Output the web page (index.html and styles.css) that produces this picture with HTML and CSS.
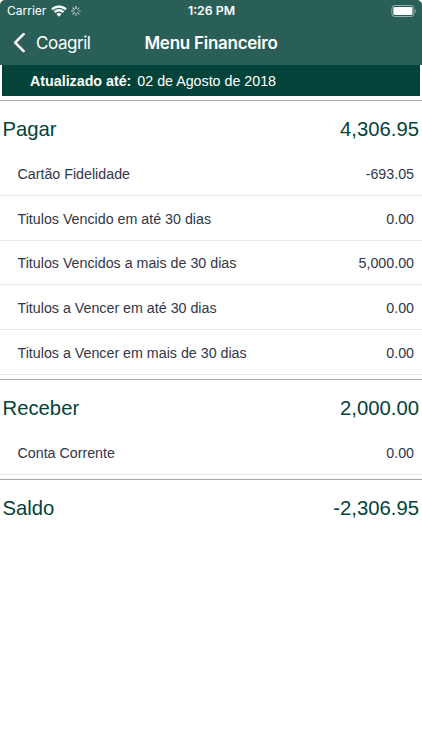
FILE: index.html
```html
<!DOCTYPE html>
<html lang="pt-BR">
<head>
    <meta charset="UTF-8">
    <meta name="viewport" content="width=device-width, initial-scale=1.0">
    <title>Menu Financeiro</title>
    <link rel="stylesheet" href="styles.css">
</head>
<body>

    <div class="screen">
        <header class="header">
            <div class="status-bar">
                <div class="status-left">
                    <span class="carrier">Carrier</span>
                    <svg class="wifi" width="16" height="12" viewBox="0 0 16 12" fill="none" stroke="#fff" stroke-width="2.3">
                        <path d="M1 4.4a10 10 0 0 1 14 0"/>
                        <path d="M3.5 7.1a6.4 6.4 0 0 1 9 0"/>
                        <path d="M5.4 9.1a3.8 3.8 0 0 1 5.2 0L8 11.7z" fill="#fff" stroke="none"/>
                    </svg>
                    <svg class="spinner" width="10" height="10" viewBox="0 0 10 10" stroke="#fff" stroke-width="1.1" stroke-linecap="round">
                        <path d="M5 .6v2" opacity=".9"/>
                        <path d="M8.1 1.9L6.7 3.3" opacity=".5"/>
                        <path d="M9.4 5h-2" opacity=".5"/>
                        <path d="M8.1 8.1L6.7 6.7" opacity=".6"/>
                        <path d="M5 9.4v-2" opacity=".65"/>
                        <path d="M1.9 8.1l1.4-1.4" opacity=".7"/>
                        <path d="M.6 5h2" opacity=".8"/>
                        <path d="M1.9 1.9l1.4 1.4" opacity=".85"/>
                    </svg>
                </div>
                <span class="time">1:26 PM</span>
                <svg class="battery" width="26" height="12" viewBox="0 0 26 12">
                    <rect x=".9" y=".5" width="22" height="11" rx="2.8" fill="none" stroke="#fff" stroke-opacity=".5"/>
                    <rect x="2.4" y="2" width="19" height="8" rx="1.3" fill="#fff"/>
                    <path d="M24.2 4.2c1.4.5 1.4 3.1 0 3.6z" fill="#fff" fill-opacity=".5"/>
                </svg>
            </div>
            <nav class="nav-bar">
                <a class="back">
                    <svg width="12" height="20" viewBox="0 0 12 20" fill="none" stroke="#fff" stroke-width="2.6" stroke-linecap="round" stroke-linejoin="round">
                        <path d="M10.6 1.2L2.2 9.7l8.4 8.5"/>
                    </svg>
                    <span class="back-label">Coagril</span>
                </a>
                <h1 class="title">Menu Financeiro</h1>
            </nav>
        </header>

        <div class="updated">
            <b>Atualizado até:</b>
            <span>02 de Agosto de 2018</span>
        </div>

        <section class="group">
            <h2 class="group-title"><span>Pagar</span><span>4,306.95</span></h2>
            <div class="row"><span>Cartão Fidelidade</span><span>-693.05</span></div>
            <div class="row"><span>Titulos Vencido em até 30 dias</span><span>0.00</span></div>
            <div class="row"><span>Titulos Vencidos a mais de 30 dias</span><span>5,000.00</span></div>
            <div class="row"><span>Titulos a Vencer em até 30 dias</span><span>0.00</span></div>
            <div class="row"><span>Titulos a Vencer em mais de 30 dias</span><span>0.00</span></div>
        </section>

        <section class="group">
            <h2 class="group-title"><span>Receber</span><span>2,000.00</span></h2>
            <div class="row"><span>Conta Corrente</span><span>0.00</span></div>
        </section>

        <section class="group">
            <h2 class="group-title"><span>Saldo</span><span>-2,306.95</span></h2>
        </section>
    </div>

</body>
</html>
```
FILE: styles.css
```css
body {
    margin: 0;
    background: #fff;
    font-family: "Liberation Sans", Arial, sans-serif;
}
.screen {
    height: 750px;
    overflow: hidden;
}
.header {
    height: 65px;
    background: #2a5f57;
    border-radius: 5px 5px 0 0;
    color: #fff;
    font-family: Inter, sans-serif;
}
.status-bar {
    display: grid;
    grid-template-columns: 1fr auto 1fr;
    align-items: center;
    height: 21px;
    padding: 0 5px 0 7px;
    font-size: 12.3px;
}
.status-left {
    display: flex;
    align-items: center;
}
.carrier {
    font-size: 12px;
}
.wifi {
    margin-left: 5px;
}
.spinner {
    margin-left: 4px;
}
.time {
    margin-left: -1px;
    font-weight: 600;
}
.battery {
    justify-self: end;
}
.nav-bar {
    display: grid;
    grid-template-columns: 1fr auto 1fr;
    align-items: center;
    height: 44px;
    padding: 0 13px;
}
.back {
    display: flex;
    align-items: center;
    gap: 11px;
}
.back-label {
    font-size: 17px;
    letter-spacing: -0.45px;
}
.title {
    margin: 0;
    font-size: 17px;
    font-weight: 600;
    letter-spacing: -0.26px;
}
.updated {
    display: flex;
    align-items: center;
    gap: 6px;
    height: 31px;
    margin: 0 2px 4px;
    padding-left: 28px;
    background: #03433a;
    color: #fff;
    font-size: 14.25px;
}
.group {
    padding-bottom: 4px;
    border-top: 1px solid #aaa;
}
.group-title {
    display: flex;
    justify-content: space-between;
    align-items: center;
    height: 50px;
    margin: 0;
    padding: 7px 3px 0 2.5px;
    box-sizing: border-box;
    color: #03433a;
    font-size: 20.3px;
    font-weight: normal;
}
.row {
    display: flex;
    justify-content: space-between;
    align-items: center;
    height: 44.8px;
    padding: 2px 8px 0 17.5px;
    border-bottom: 1px solid #e8e8e8;
    box-sizing: border-box;
    color: #32364a;
    font-size: 14.25px;
}
```
